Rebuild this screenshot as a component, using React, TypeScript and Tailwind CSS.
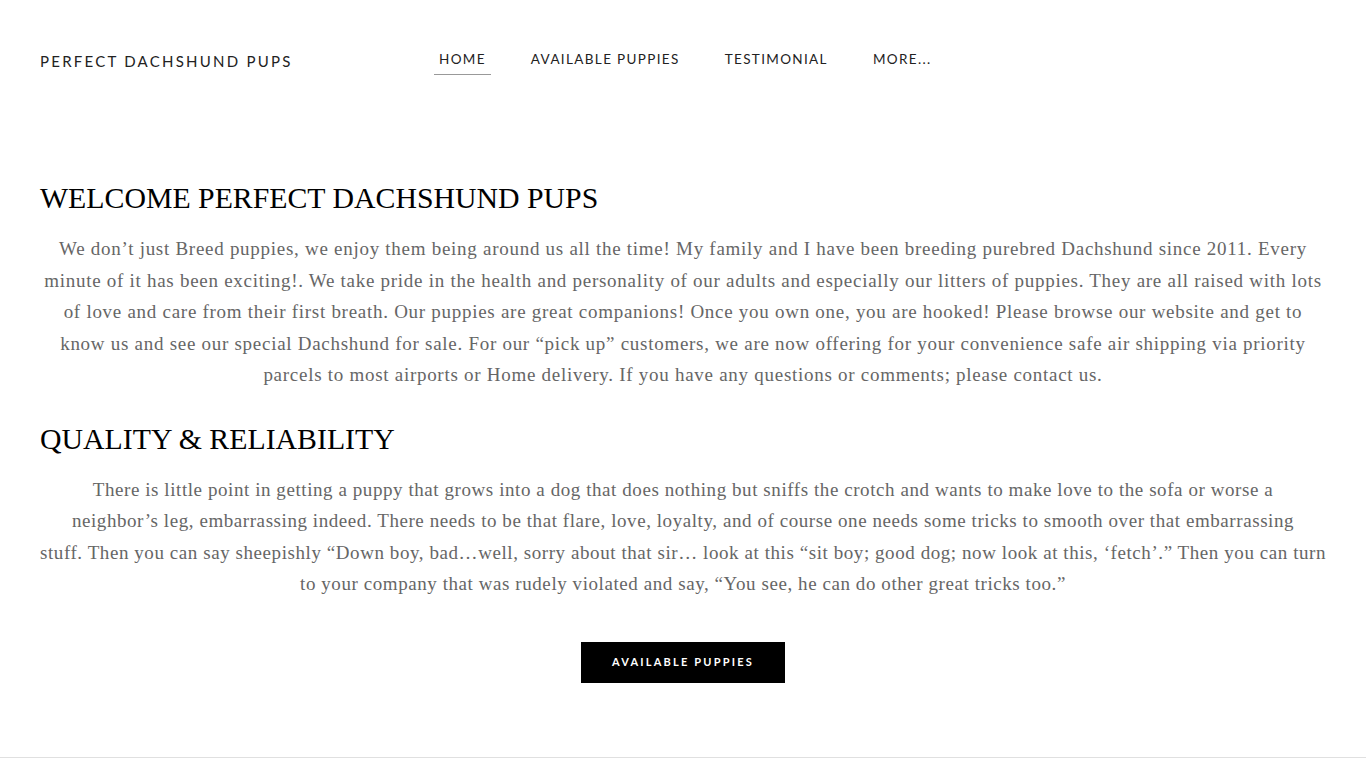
const intro = [
  'We don’t just Breed puppies, we enjoy them being around us all the time! My family and I have been breeding purebred Dachshund since 2011. Every',
  'minute of it has been exciting!. We take pride in the health and personality of our adults and especially our litters of puppies. They are all raised with lots',
  'of love and care from their first breath. Our puppies are great companions! Once you own one, you are hooked! Please browse our website and get to',
  'know us and see our special Dachshund for sale. For our “pick up” customers, we are now offering for your convenience safe air shipping via priority',
  'parcels to most airports or Home delivery. If you have any questions or comments; please contact us.',
]

const quality = [
  'There is little point in getting a puppy that grows into a dog that does nothing but sniffs the crotch and wants to make love to the sofa or worse a',
  'neighbor’s leg, embarrassing indeed. There needs to be that flare, love, loyalty, and of course one needs some tricks to smooth over that embarrassing',
  'stuff. Then you can say sheepishly “Down boy, bad…well, sorry about that sir… look at this “sit boy; good dog; now look at this, ‘fetch’.” Then you can turn',
  'to your company that was rudely violated and say, “You see, he can do other great tricks too.”',
]

export default function App() {
  return (
    <div className="min-h-[768px] bg-white flex flex-col">
      <header className="flex items-center h-[122px] pl-10 pr-10">
        <div className="w-[394px] shrink-0 pt-[1px] font-['Lato',sans-serif] text-[15px] tracking-[0.15em] text-[#222]">
          PERFECT DACHSHUND PUPS
        </div>
        <nav className="flex items-center gap-[35px] font-['Lato',sans-serif] text-[13.5px] tracking-[0.1em] text-[#222] mt-[2px]">
          <a className="px-[5px] pb-[4px] border-b border-[#999]">HOME</a>
          <a className="px-[5px] pb-[5px]">AVAILABLE PUPPIES</a>
          <a className="px-[5px] pb-[5px]">TESTIMONIAL</a>
          <a className="px-[5px] pb-[5px]">MORE...</a>
        </nav>
      </header>

      <main className="px-10 pt-[56px] font-['Liberation_Serif',serif]">
        <h2 className="text-[29.8px] leading-[40px] text-black">WELCOME PERFECT DACHSHUND PUPS</h2>
        <div className="mt-[15px] text-center text-[19px] leading-[31.5px] text-[#666] tracking-[0.038em]">
          {intro.map((line, i) => (
            <p key={i} className="whitespace-nowrap">{line}</p>
          ))}
        </div>
        <h2 className="mt-[28px] text-[29.8px] leading-[40px] text-black">QUALITY &amp; RELIABILITY</h2>
        <div className="mt-[15px] text-center text-[19px] leading-[31.5px] text-[#666] tracking-[0.03em]">
          {quality.map((line, i) => (
            <p key={i} className="whitespace-nowrap">{line}</p>
          ))}
        </div>
        <div className="flex justify-center mt-[42px]">
          <button className="w-[204px] h-[41px] bg-black text-white font-['Lato',sans-serif] font-bold text-[11px] tracking-[0.2em]">
            AVAILABLE PUPPIES
          </button>
        </div>
      </main>
      <div className="mt-[74px] border-t border-[#e0e0e0]" />
    </div>
  )
}
